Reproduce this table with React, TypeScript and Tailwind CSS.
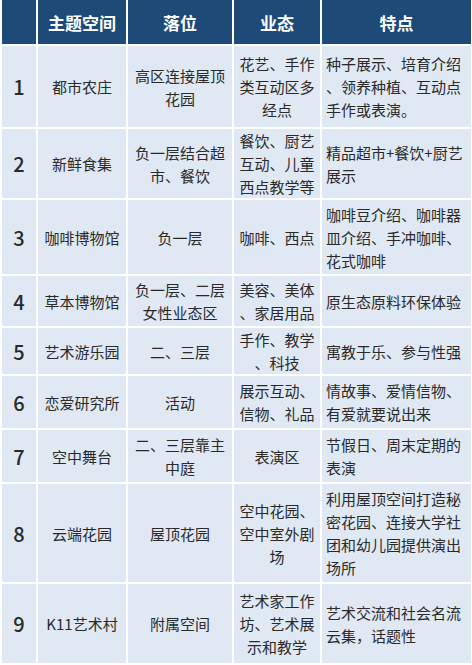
const rows: { n: string; name: string; loc: string; biz: string; feat: string; h: string }[] = [
  { n: '1', name: '都市农庄', loc: '高区连接屋顶\n花园', biz: '花艺、手作\n类互动区多\n经点', feat: '种子展示、培育介绍\n、领养种植、互动点\n手作或表演。', h: 'h-[83px]' },
  { n: '2', name: '新鲜食集', loc: '负一层结合超\n市、餐饮', biz: '餐饮、厨艺\n互动、儿童\n西点教学等', feat: '精品超市+餐饮+厨艺\n展示', h: 'h-[69px]' },
  { n: '3', name: '咖啡博物馆', loc: '负一层', biz: '咖啡、西点', feat: '咖啡豆介绍、咖啡器\n皿介绍、手冲咖啡、\n花式咖啡', h: 'h-[76px]' },
  { n: '4', name: '草本博物馆', loc: '负一层、二层\n女性业态区', biz: '美容、美体\n、家居用品', feat: '原生态原料环保体验', h: 'h-[52px]' },
  { n: '5', name: '艺术游乐园', loc: '二、三层', biz: '手作、教学\n、科技', feat: '寓教于乐、参与性强', h: 'h-[48px]' },
  { n: '6', name: '恋爱研究所', loc: '活动', biz: '展示互动、\n信物、礼品', feat: '情故事、爱情信物、\n有爱就要说出来', h: 'h-[54px]' },
  { n: '7', name: '空中舞台', loc: '二、三层靠主\n中庭', biz: '表演区', feat: '节假日、周末定期的\n表演', h: 'h-[54px]' },
  { n: '8', name: '云端花园', loc: '屋顶花园', biz: '空中花园、\n空中室外剧\n场', feat: '利用屋顶空间打造秘\n密花园、连接大学社\n团和幼儿园提供演出\n场所', h: 'h-[100px]' },
  { n: '9', name: 'K11艺术村', loc: '附属空间', biz: '艺术家工作\n坊、艺术展\n示和教学', feat: '艺术交流和社会名流\n云集，话题性', h: 'h-[81px]' },
];

function Lines({ text }: { text: string }) {
  const parts = text.split('\n');
  return (
    <>
      {parts.map((p, i) => (
        <span key={i} className="block whitespace-nowrap">
          {p}
        </span>
      ))}
    </>
  );
}

export default function App() {
  return (
    <div
      className="w-[472px] h-[665px] bg-white overflow-hidden"
      style={{ fontFamily: '"Noto Sans CJK SC", "Noto Sans", sans-serif' }}
    >
      <table className="table-fixed border-collapse w-[471px] text-[#2a2a2a] text-[15px] leading-[23px]">
        <colgroup>
          <col className="w-[36px]" />
          <col className="w-[90px]" />
          <col className="w-[106px]" />
          <col className="w-[88px]" />
          <col className="w-[151px]" />
        </colgroup>
        <thead>
          <tr className="h-[45px] bg-[#1e4a78] text-white text-[17px] font-bold">
            <th className="border-2 border-white border-t-0"></th>
            <th className="border-2 border-white border-t-0">主题空间</th>
            <th className="border-2 border-white border-t-0">落位</th>
            <th className="border-2 border-white border-t-0">业态</th>
            <th className="border-2 border-white border-t-0">特点</th>
          </tr>
        </thead>
        <tbody>
          {rows.map((r) => (
            <tr key={r.n} className={`${r.h} bg-[#dfe8f3]`}>
              <td className="border-2 border-white text-center text-[20px] font-medium">{r.n}</td>
              <td className="border-2 border-white text-center">{r.name}</td>
              <td className="border-2 border-white text-center">
                <Lines text={r.loc} />
              </td>
              <td className="border-2 border-white text-center">
                <Lines text={r.biz} />
              </td>
              <td className="border-2 border-white pl-[4px] text-left">
                <Lines text={r.feat} />
              </td>
            </tr>
          ))}
        </tbody>
      </table>
    </div>
  );
}
